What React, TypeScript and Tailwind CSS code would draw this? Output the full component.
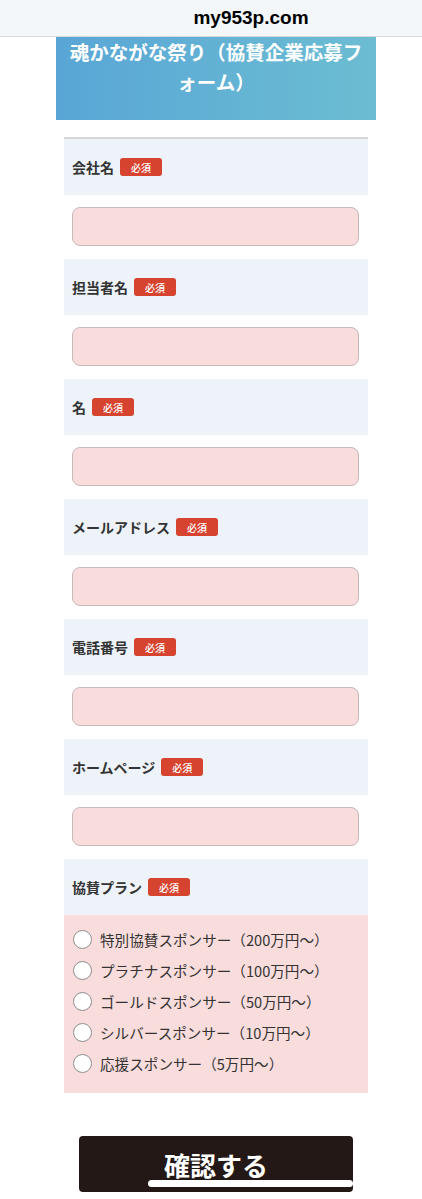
import React from "react";

const fields = ["会社名", "担当者名", "名", "メールアドレス", "電話番号", "ホームページ"];
const plans = [
  "特別協賛スポンサー（200万円〜）",
  "プラチナスポンサー（100万円〜）",
  "ゴールドスポンサー（50万円〜）",
  "シルバースポンサー（10万円〜）",
  "応援スポンサー（5万円〜）",
];

function Label({ text }: { text: string }) {
  return (
    <div className="h-[56px] bg-[#eef3f9] flex items-center pl-[8px]">
      <span className="text-[14px] font-bold text-[#333]">{text}</span>
      <span className="ml-[6px] w-[42px] h-[18px] rounded-[3px] bg-[#d6432f] text-white text-[10px] font-medium flex items-center justify-center">
        必須
      </span>
    </div>
  );
}

export default function App() {
  return (
    <div
      className="w-[422px] h-[1199px] bg-white relative overflow-hidden"
      style={{ fontFamily: '"Noto Sans CJK JP", "Noto Sans", sans-serif' }}
    >
      <div className="h-[37px] bg-[#f3f7fa] border-b border-[#d5d9dc] flex items-center justify-center pl-[80px]">
        <span
          className="text-[19px] font-bold text-black"
          style={{ fontFamily: '"Liberation Sans", Arial, sans-serif' }}
        >
          my953p.com
        </span>
      </div>
      <div className="ml-[56px] w-[320px] h-[83px] bg-gradient-to-r from-[#59a6d6] to-[#6cbdd2] text-white text-[19.5px] font-bold leading-[30px] text-center px-[8px]">
        魂かながな祭り（協賛企業応募フォーム）
      </div>
      <div className="mt-[17px] ml-[64px] w-[304px] border-t-2 border-[#d7d7d7]">
        {fields.map((f) => (
          <div key={f}>
            <Label text={f} />
            <div className="h-[64px] bg-white pt-[12px] pl-[8px]">
              <div className="w-[287px] h-[39px] rounded-[8px] bg-[#f9dcdc] border border-[#c9b8b8]" />
            </div>
          </div>
        ))}
        <Label text="協賛プラン" />
        <div className="bg-[#f9dcdc] pt-[9px] pb-[14px] pl-[9px]">
          {plans.map((p) => (
            <div key={p} className="h-[31px] flex items-center">
              <span className="w-[19px] h-[19px] rounded-full bg-white border border-[#8e8e8e]" />
              <span className="ml-[8px] text-[14.6px] text-[#333]">{p}</span>
            </div>
          ))}
        </div>
      </div>
      <div className="mt-[43px] ml-[79px] w-[274px] h-[56px] rounded-[4px] bg-[#231815] flex items-center justify-center">
        <span className="text-white text-[26px] font-bold">確認する</span>
      </div>
      <div className="absolute left-[148px] top-[1180px] w-[205px] h-[7px] rounded-full bg-white" />
    </div>
  );
}
